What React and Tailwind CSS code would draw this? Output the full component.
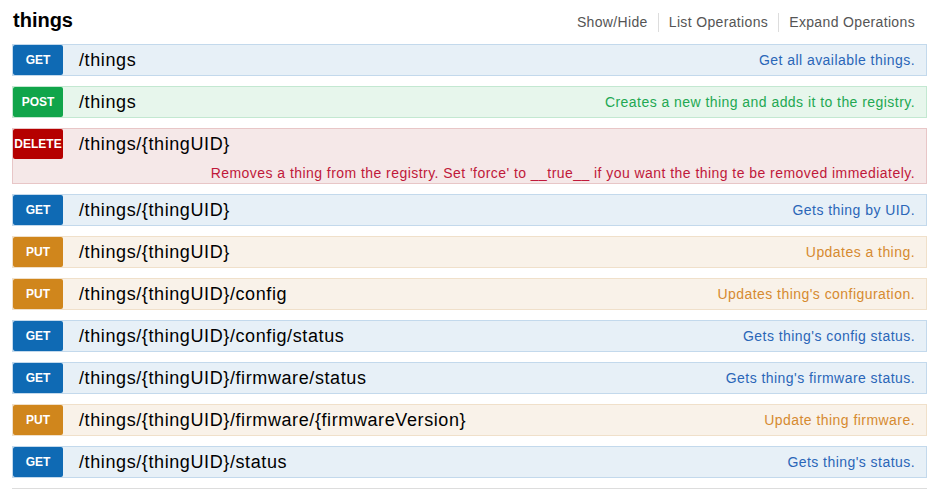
import React from "react";

const styles = {
  get: {
    row: "bg-[#e7f0f7] border-[#c3d9ec]",
    badge: "bg-[#0f6ab4]",
    desc: "text-[#2a66b8]",
  },
  post: {
    row: "bg-[#e7f6ec] border-[#c3e8d1]",
    badge: "bg-[#10a54a]",
    desc: "text-[#22a852]",
  },
  delete: {
    row: "bg-[#f5e8e8] border-[#e8c6c7]",
    badge: "bg-[#b50000]",
    desc: "text-[#c0183a]",
  },
  put: {
    row: "bg-[#f9f2e9] border-[#f0e0ca]",
    badge: "bg-[#d0861c]",
    desc: "text-[#d68a30]",
  },
};

const operations = [
  { method: "get", path: "/things", summary: "Get all available things." },
  { method: "post", path: "/things", summary: "Creates a new thing and adds it to the registry." },
  {
    method: "delete",
    path: "/things/{thingUID}",
    summary:
      "Removes a thing from the registry. Set 'force' to __true__ if you want the thing te be removed immediately.",
    wrap: true,
  },
  { method: "get", path: "/things/{thingUID}", summary: "Gets thing by UID." },
  { method: "put", path: "/things/{thingUID}", summary: "Updates a thing." },
  { method: "put", path: "/things/{thingUID}/config", summary: "Updates thing's configuration." },
  { method: "get", path: "/things/{thingUID}/config/status", summary: "Gets thing's config status." },
  { method: "get", path: "/things/{thingUID}/firmware/status", summary: "Gets thing's firmware status." },
  {
    method: "put",
    path: "/things/{thingUID}/firmware/{firmwareVersion}",
    summary: "Update thing firmware.",
  },
  { method: "get", path: "/things/{thingUID}/status", summary: "Gets thing's status." },
];

const Operation = ({ op }) => {
  const s = styles[op.method];
  return (
    <li className={`mb-[10px] border ${s.row}`}>
      <div className="flex h-[30px] items-center">
        <span
          className={`flex h-[30px] w-[50px] shrink-0 items-center justify-center rounded-[2px] text-[12px] font-bold uppercase text-white ${s.badge}`}
        >
          {op.method}
        </span>
        <span className="ml-[16px] text-[18px] leading-[30px] tracking-[0.6px] text-black">{op.path}</span>
        {!op.wrap && (
          <span className={`ml-auto pr-[11px] text-[14px] leading-[30px] tracking-[0.45px] ${s.desc}`}>
            {op.summary}
          </span>
        )}
      </div>
      {op.wrap && (
        <div className={`pt-[4px] pr-[11px] text-right text-[14px] leading-[20px] tracking-[0.45px] ${s.desc}`}>
          {op.summary}
        </div>
      )}
    </li>
  );
};

export default function App() {
  return (
    <div className="bg-white pl-3 pr-[17px] font-['Liberation_Sans',Arial,sans-serif]">
      <div className="flex h-[44px] items-start justify-between">
        <h2 className="pl-[1px] pt-[6px] text-[20px] font-bold leading-[28px] text-black">things</h2>
        <ul className="mt-[13px] flex pr-[12px] text-[14px] leading-[19px] tracking-[0.35px] text-[#555]">
          <li className="pr-[10px]">Show/Hide</li>
          <li className="border-l border-[#ddd] px-[10px]">List Operations</li>
          <li className="border-l border-[#ddd] pl-[10px]">Expand Operations</li>
        </ul>
      </div>
      <ul>
        {operations.map((op, i) => (
          <Operation key={i} op={op} />
        ))}
      </ul>
      <div className="border-t border-[#ddd]" />
    </div>
  );
}
